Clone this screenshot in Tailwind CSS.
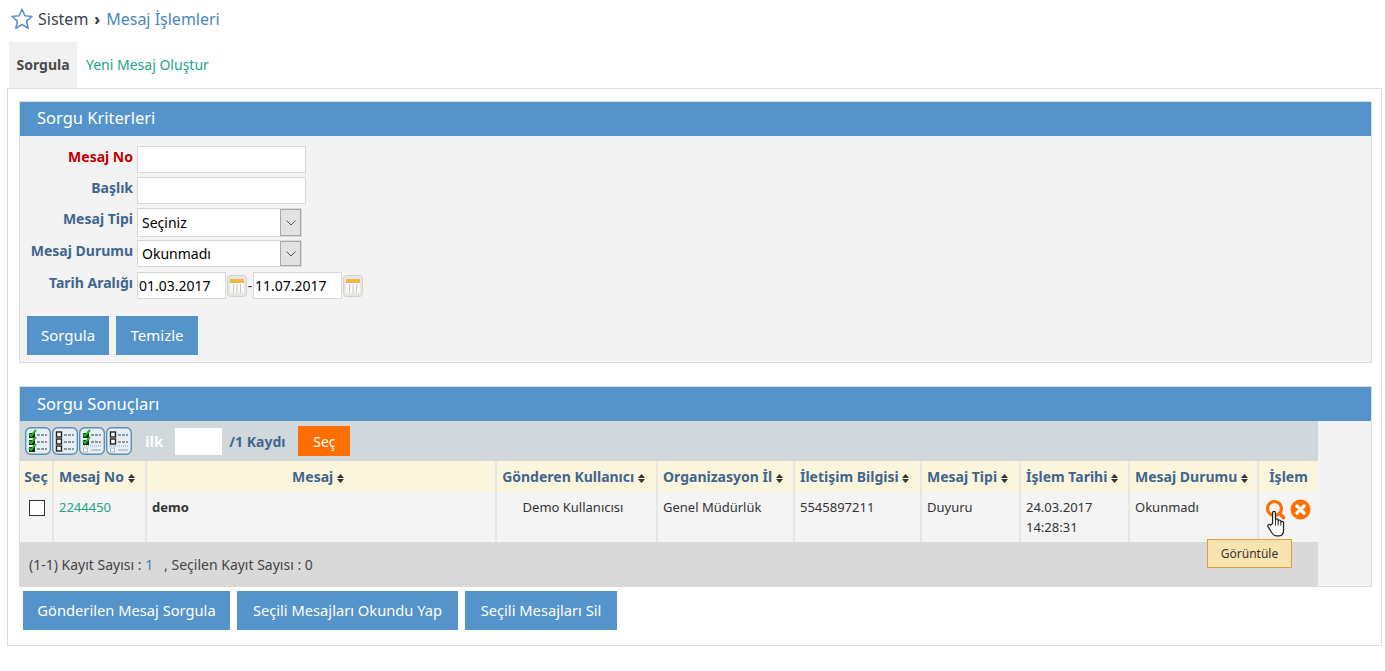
<!DOCTYPE html>
<html lang="tr">
<head>
  <meta charset="UTF-8">
  <title>Mesaj İşlemleri</title>
  <script src="https://cdn.jsdelivr.net/npm/@tailwindcss/browser@4"></script>
</head>
<body class="bg-white h-[671px] overflow-hidden font-['Noto_Sans',sans-serif] text-[14px] text-[#333]">

  <!-- Breadcrumb -->
  <div class="flex items-center h-[42px] pl-[10px] pb-[4px] text-[16px]">
    <svg class="w-[24px] h-[24px] mr-[4px]" viewBox="0 0 24 24" fill="none" stroke="#5b93cb" stroke-width="1.6" stroke-linejoin="round"><path d="M12 2.2l2.9 6.6 7.1.7-5.4 4.7 1.6 7-6.2-3.7-6.2 3.7 1.6-7L2 9.500l7.100-.7z"/></svg>
    <span class="text-[#3a4450]">Sistem</span>
    <span class="mx-[6px] font-bold text-[#333]">›</span>
    <span class="text-[#4c86c0]">Mesaj İşlemleri</span>
  </div>

  <!-- Sekmeler -->
  <div class="flex h-[46px] pl-[9px]">
    <div class="w-[68px] bg-[#f1f1f1] flex items-center justify-center pb-[1px] font-bold text-[#4a4a4a] text-[14px]">Sorgula</div>
    <div class="flex items-center pl-[9px] pb-[1px] text-[#1aa58a] text-[14px]">Yeni Mesaj Oluştur</div>
  </div>

  <!-- Ana kutu -->
  <div class="ml-[7px] w-[1375px] h-[558px] border border-[#dddddd] pt-[12px] pl-[11px] pr-[9px]">

    <!-- Sorgu kriterleri -->
    <section class="h-[262px] bg-[#f3f3f3] border border-[#dddddd]">
      <h2 class="h-[34px] bg-[#5594cb] text-white text-[16.5px] leading-[32px] pl-[17px]">Sorgu Kriterleri</h2>

      <form class="pt-[10px] text-[14px]">
        <div class="flex h-[27px] mb-[4px]">
          <label class="w-[113px] text-right font-bold text-[#c00000] leading-[21px]">Mesaj No</label>
          <input class="ml-[4px] w-[169px] h-[27px] bg-white border border-[#d8d8d8]">
        </div>
        <div class="flex h-[27px] mb-[4px]">
          <label class="w-[113px] text-right font-bold text-[#3f668f] leading-[21px]">Başlık</label>
          <input class="ml-[4px] w-[169px] h-[27px] bg-white border border-[#d8d8d8]">
        </div>
        <div class="flex h-[29px] mb-[3px]">
          <label class="w-[113px] text-right font-bold text-[#3f668f] leading-[21px]">Mesaj Tipi</label>
          <div class="ml-[4px] w-[165px] h-[29px] flex bg-white border border-[#d8d8d8]">
            <select class="flex-1 min-w-0 appearance-none pl-[4px] text-[14px] text-black outline-none"><option>Seçiniz</option></select>
            <span class="w-[21px] bg-[#e2e2e2] border border-[#a8a8a8] flex items-center justify-center">
              <svg class="w-[10px] h-[6px]" viewBox="0 0 10 6" fill="none" stroke="#555" stroke-width="1"><path d="M.5.500L5 5 9.500.5"/></svg>
            </span>
          </div>
        </div>
        <div class="flex h-[27px] mb-[5px]">
          <label class="w-[113px] text-right font-bold text-[#3f668f] leading-[21px] whitespace-nowrap">Mesaj Durumu</label>
          <div class="ml-[4px] w-[165px] h-[27px] flex bg-white border border-[#d8d8d8]">
            <select class="flex-1 min-w-0 appearance-none pl-[4px] text-[14px] text-black outline-none"><option>Okunmadı</option></select>
            <span class="w-[21px] bg-[#e2e2e2] border border-[#a8a8a8] flex items-center justify-center">
              <svg class="w-[10px] h-[6px]" viewBox="0 0 10 6" fill="none" stroke="#555" stroke-width="1"><path d="M.5.500L5 5 9.500.5"/></svg>
            </span>
          </div>
        </div>
        <div class="flex h-[27px]">
          <label class="w-[113px] text-right font-bold text-[#3f668f] leading-[21px] whitespace-nowrap">Tarih Aralığı</label>
          <input value="01.03.2017" class="ml-[4px] w-[89px] h-[27px] pl-[1px] text-[14px] text-black bg-white border border-[#d8d8d8]">
          <svg class="ml-[1px] mt-[3px] w-[20px] h-[22px]" viewBox="0 0 20 22"><rect x=".5" y=".5" width="19" height="21" rx="3" fill="#e6e6e2" stroke="#d2d2ce"/><rect x="3" y="4" width="14" height="14" fill="#f8f8f4"/><rect x="3" y="4" width="14" height="4" fill="#f0b648"/><path d="M6.500 9v9M10 9v9M13.500 9v9" stroke="#c8c8c4"/></svg>
          <span class="w-[6px] text-center leading-[27px]">-</span>
          <input value="11.07.2017" class="w-[89px] h-[27px] pl-[1px] text-[14px] text-black bg-white border border-[#d8d8d8]">
          <svg class="ml-[1px] mt-[3px] w-[20px] h-[22px]" viewBox="0 0 20 22"><rect x=".5" y=".5" width="19" height="21" rx="3" fill="#e6e6e2" stroke="#d2d2ce"/><rect x="3" y="4" width="14" height="14" fill="#f8f8f4"/><rect x="3" y="4" width="14" height="4" fill="#f0b648"/><path d="M6.500 9v9M10 9v9M13.500 9v9" stroke="#c8c8c4"/></svg>
        </div>
        <div class="flex gap-[7px] pl-[7px] pt-[17px]">
          <button type="button" class="w-[82px] h-[39px] bg-[#5594cb] text-white text-[15px]">Sorgula</button>
          <button type="button" class="w-[82px] h-[39px] bg-[#5594cb] text-white text-[15px]">Temizle</button>
        </div>
      </form>
    </section>

    <!-- Sorgu sonuçları -->
    <section class="relative mt-[23px] h-[201px] bg-[#f3f3f3] border border-[#dddddd]">
      <h2 class="h-[34px] bg-[#5594cb] text-white text-[16.5px] leading-[33px] pl-[17px]">Sorgu Sonuçları</h2>

      <div class="w-[1298px] h-[40px] bg-[#d0d8dc] flex items-center pl-[5px]">
        <div class="flex gap-[1px]">
          <svg class="w-[26px] h-[28px]" viewBox="0 0 26 28"><rect x=".7" y=".7" width="24.600" height="26.600" rx="5" fill="#e6eff5" stroke="#5f8fb0" stroke-width="1.400"/><g fill="#222"><rect x="4" y="6" width="6" height="5"/><rect x="4" y="13" width="6" height="5"/><rect x="4" y="20" width="6" height="5"/></g><path d="M4 7l2 2 5-6M4 14l2 2 5-6M4 21l2 2 5-6" fill="none" stroke="#22b422" stroke-width="2"/><path d="M12 8h10M12 15h10M12 22h10" stroke="#777" stroke-width="1.500" stroke-dasharray="3 1"/></svg>
          <svg class="w-[26px] h-[28px]" viewBox="0 0 26 28"><rect x=".7" y=".7" width="24.600" height="26.600" rx="5" fill="#e6eff5" stroke="#5f8fb0" stroke-width="1.400"/><g fill="#fff" stroke="#222" stroke-width="1.400"><rect x="4.500" y="5" width="5" height="5"/><rect x="4.500" y="12" width="5" height="5"/><rect x="4.500" y="19" width="5" height="5"/></g><path d="M12 8h10M12 15h10M12 22h10" stroke="#777" stroke-width="1.500" stroke-dasharray="3 1"/></svg>
          <svg class="w-[26px] h-[28px]" viewBox="0 0 26 28"><rect x=".7" y=".7" width="24.600" height="26.600" rx="5" fill="#e6eff5" stroke="#5f8fb0" stroke-width="1.400"/><g fill="#222"><rect x="4" y="6" width="6" height="5"/><rect x="4" y="13" width="6" height="5"/></g><path d="M4 7l2 2 5-6M4 14l2 2 5-6" fill="none" stroke="#22b422" stroke-width="2"/><path d="M12 8h10M12 15h10" stroke="#777" stroke-width="1.500" stroke-dasharray="3 1"/><path d="M3 19h20" stroke="#7aa6c8" stroke-dasharray="1 1"/><rect x="4.500" y="21" width="4" height="4" fill="#f4f4f4" stroke="#bbb"/><path d="M12 23h10" stroke="#bbb" stroke-width="1.500"/></svg>
          <svg class="w-[26px] h-[28px]" viewBox="0 0 26 28"><rect x=".7" y=".7" width="24.600" height="26.600" rx="5" fill="#e6eff5" stroke="#5f8fb0" stroke-width="1.400"/><g fill="#fff" stroke="#222" stroke-width="1.400"><rect x="4.500" y="5" width="5" height="5"/><rect x="4.500" y="12" width="5" height="5"/></g><path d="M12 8h10M12 15h10" stroke="#777" stroke-width="1.500" stroke-dasharray="3 1"/><path d="M3 19h20" stroke="#7aa6c8" stroke-dasharray="1 1"/><rect x="4.500" y="21" width="4" height="4" fill="#f4f4f4" stroke="#bbb"/><path d="M12 23h10" stroke="#bbb" stroke-width="1.500"/></svg>
        </div>
        <span class="ml-[13px] font-bold text-white text-[15px]">ilk</span>
        <input class="ml-[12px] w-[47px] h-[27px] bg-white">
        <span class="ml-[7px] font-bold text-[#3f668f] text-[14px] whitespace-nowrap">/1 Kaydı</span>
        <button type="button" class="ml-[13px] w-[52px] h-[30px] bg-[#ff6f00] text-white text-[14px]">Seç</button>
      </div>

      <table class="w-[1298px] table-fixed border-collapse">
        <colgroup>
          <col class="w-[33px]"><col class="w-[93px]"><col class="w-[350px]"><col class="w-[161px]"><col class="w-[137px]"><col class="w-[127px]"><col class="w-[99px]"><col class="w-[109px]"><col class="w-[129px]"><col class="w-[60px]">
        </colgroup>
        <thead>
          <tr class="h-[31px] bg-[#fbf5dd] text-[#3f668f] font-bold text-[14px] whitespace-nowrap">
            <th class="border-r-2 border-[#e6e6e6] text-center">Seç</th>
            <th class="border-r-2 border-[#e6e6e6] text-left pl-[5px]">Mesaj No <svg class="inline w-[7px] h-[9px]" viewBox="0 0 7 9" fill="#333"><path d="M3.500 0L7 4H0zM0 5h7L3.500 9z"/></svg></th>
            <th class="border-r-2 border-[#e6e6e6] text-center pr-[6px]">Mesaj <svg class="inline w-[7px] h-[9px]" viewBox="0 0 7 9" fill="#333"><path d="M3.500 0L7 4H0zM0 5h7L3.500 9z"/></svg></th>
            <th class="border-r-2 border-[#e6e6e6] text-center pr-[6px]">Gönderen Kullanıcı <svg class="inline w-[7px] h-[9px]" viewBox="0 0 7 9" fill="#333"><path d="M3.500 0L7 4H0zM0 5h7L3.500 9z"/></svg></th>
            <th class="border-r-2 border-[#e6e6e6] text-left pl-[5px]">Organizasyon İl <svg class="inline w-[7px] h-[9px]" viewBox="0 0 7 9" fill="#333"><path d="M3.500 0L7 4H0zM0 5h7L3.500 9z"/></svg></th>
            <th class="border-r-2 border-[#e6e6e6] text-left pl-[5px]">İletişim Bilgisi <svg class="inline w-[7px] h-[9px]" viewBox="0 0 7 9" fill="#333"><path d="M3.500 0L7 4H0zM0 5h7L3.500 9z"/></svg></th>
            <th class="border-r-2 border-[#e6e6e6] text-left pl-[5px]">Mesaj Tipi <svg class="inline w-[7px] h-[9px]" viewBox="0 0 7 9" fill="#333"><path d="M3.500 0L7 4H0zM0 5h7L3.500 9z"/></svg></th>
            <th class="border-r-2 border-[#e6e6e6] text-left pl-[5px]">İşlem Tarihi <svg class="inline w-[7px] h-[9px]" viewBox="0 0 7 9" fill="#333"><path d="M3.500 0L7 4H0zM0 5h7L3.500 9z"/></svg></th>
            <th class="border-r-2 border-[#e6e6e6] text-left pl-[5px]">Mesaj Durumu <svg class="inline w-[7px] h-[9px]" viewBox="0 0 7 9" fill="#333"><path d="M3.500 0L7 4H0zM0 5h7L3.500 9z"/></svg></th>
            <th class="text-center">İşlem</th>
          </tr>
        </thead>
        <tbody>
          <tr class="h-[50px] bg-[#f4f4f4] align-top text-[13px] leading-[20px] text-[#333]">
            <td class="border-r-2 border-[#e6e6e6] pt-[6px] pl-[9px]"><input type="checkbox" class="appearance-none block mt-[2px] w-[16px] h-[16px] bg-white border border-[#333]"></td>
            <td class="border-r-2 border-[#e6e6e6] pt-[5px] pl-[5px] text-[#1aa58a]">2244450</td>
            <td class="border-r-2 border-[#e6e6e6] pt-[5px] pl-[5px] font-bold">demo</td>
            <td class="border-r-2 border-[#e6e6e6] pt-[5px] pr-[7px] text-center">Demo Kullanıcısı</td>
            <td class="border-r-2 border-[#e6e6e6] pt-[5px] pl-[5px]">Genel Müdürlük</td>
            <td class="border-r-2 border-[#e6e6e6] pt-[5px] pl-[5px]">5545897211</td>
            <td class="border-r-2 border-[#e6e6e6] pt-[5px] pl-[5px]">Duyuru</td>
            <td class="border-r-2 border-[#e6e6e6] pt-[5px] pl-[5px]">24.03.2017<br>14:28:31</td>
            <td class="border-r-2 border-[#e6e6e6] pt-[5px] pl-[5px]">Okunmadı</td>
            <td class="pt-[7px] pl-[6px]">
              <div class="relative flex gap-[4px]">
                <svg class="w-[21px] h-[21px]" viewBox="0 0 21 21" fill="none" stroke="#ff6f00"><circle cx="9.500" cy="9.500" r="7" stroke-width="3.200"/><path d="M14.500 14.500l4 4" stroke-width="3.600" stroke-linecap="round"/></svg>
                <svg class="w-[21px] h-[21px]" viewBox="0 0 21 21"><circle cx="10.500" cy="10.500" r="10" fill="#ff6f00"/><path d="M7 7l7 7M14 7l-7 7" stroke="#fff" stroke-width="3.200" stroke-linecap="round"/></svg>
                <svg class="absolute left-[2px] top-[11px] w-[19px] h-[27px]" viewBox="0 0 17 24"><path d="M5 12V2.500a1.300 1.300 0 0 1 2.600 0V9c0-1.500 2.400-1.500 2.400 0v1c0-1.500 2.400-1.500 2.400 0v1c0-1.300 2.400-1.300 2.400.3V18c0 3-1.600 5-4 5H8.500c-1.800 0-3-1-4-2.500L1 15c-.8-1.500 1-2.700 2.200-1.500z" fill="#fff" stroke="#222" stroke-width="1.100" stroke-linejoin="round"/><path d="M7.600 9v5M10 10v4M12.400 11v3" stroke="#222" stroke-width=".8"/></svg>
              </div>
            </td>
          </tr>
          <tr class="h-[45px] bg-[#d9d9d9] text-[14px] text-[#444]">
            <td colspan="10" class="pl-[9px]">(1-1) Kayıt Sayısı : <span class="text-[#3f7fb5]">1</span> &nbsp;&nbsp;, Seçilen Kayıt Sayısı : 0</td>
          </tr>
        </tbody>
      </table>

      <!-- Tooltip -->
      <div class="absolute left-[1187px] top-[152px] w-[85px] h-[29px] bg-[#f9e4b0] border border-[#e59a41] flex items-center justify-center text-[12px] text-[#333]">Görüntüle</div>
    </section>

    <div class="flex gap-[7px] pl-[4px] pt-[4px]">
      <button type="button" class="w-[207px] h-[39px] bg-[#5594cb] text-white text-[14.7px] whitespace-nowrap">Gönderilen Mesaj Sorgula</button>
      <button type="button" class="w-[221px] h-[39px] bg-[#5594cb] text-white text-[14.7px] whitespace-nowrap">Seçili Mesajları Okundu Yap</button>
      <button type="button" class="w-[152px] h-[39px] bg-[#5594cb] text-white text-[14.7px] whitespace-nowrap">Seçili Mesajları Sil</button>
    </div>
  </div>
</body>
</html>
